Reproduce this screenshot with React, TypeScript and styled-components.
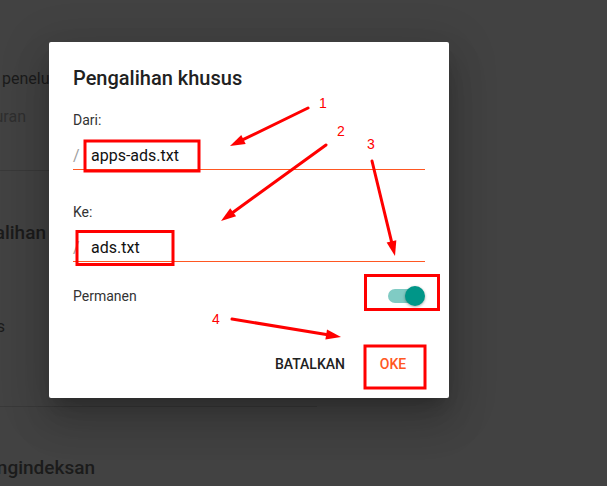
import React from 'react';
import styled, { createGlobalStyle } from 'styled-components';

const GlobalStyle = createGlobalStyle`
  html, body {
    margin: 0;
    padding: 0;
    background: #424242;
  }
  * {
    box-sizing: border-box;
  }
`;

const Page = styled.div`
  position: relative;
  width: 607px;
  height: 486px;
  overflow: hidden;
  background: #424242;
  font-family: Roboto, 'Liberation Sans', sans-serif;
`;

// the settings page that sits under the dark overlay
const BgColumn = styled.div`
  display: flex;
  flex-direction: column;
  padding-top: 67px;
  width: 317px;
`;

const BgLine = styled.div<{ $top: number; $end?: number; $faint?: boolean; $heading?: boolean }>`
  display: flex;
  justify-content: ${({ $end }) => ($end ? 'flex-end' : 'flex-start')};
  width: ${({ $end }) => ($end ? `${$end}px` : 'auto')};
  margin-top: ${({ $top }) => $top}px;
  padding-left: ${({ $end }) => ($end ? '0' : '2px')};
  white-space: nowrap;
  height: 24px;
  line-height: 24px;
  font-size: ${({ $heading }) => ($heading ? '19px' : '16px')};
  font-weight: ${({ $heading }) => ($heading ? 500 : 400)};
  color: ${({ $faint }) => ($faint ? '#2f2f2f' : '#1b1b1b')};
`;

const BgDivider = styled.div<{ $top: number }>`
  margin-top: ${({ $top }) => $top}px;
  height: 1px;
  width: 317px;
  background: #393939;
`;

const Dialog = styled.div`
  position: absolute;
  left: 49px;
  top: 42px;
  width: 400px;
  height: 356px;
  padding: 24px 24px 16px;
  background: #ffffff;
  border-radius: 2px;
  box-shadow: 0 11px 15px -7px rgba(0, 0, 0, 0.2), 0 24px 38px 3px rgba(0, 0, 0, 0.14),
    0 9px 46px 8px rgba(0, 0, 0, 0.12);
  display: flex;
  flex-direction: column;
`;

const Title = styled.h2`
  margin: 0;
  font-size: 20px;
  line-height: 24px;
  font-weight: 500;
  color: #212121;
`;

const Label = styled.div<{ $top: number }>`
  margin-top: ${({ $top }) => $top}px;
  font-size: 14px;
  line-height: 20px;
  color: #333333;
`;

const InputRow = styled.div`
  display: flex;
  align-items: center;
  margin-top: 14px;
  padding-bottom: 1px;
  border-bottom: 1px solid #ff5722;
  height: 26px;
  font-size: 16px;
  line-height: 24px;
`;

const Prefix = styled.span`
  width: 18px;
  color: #9e9e9e;
`;

const Value = styled.span`
  color: #111111;
`;

const ToggleRow = styled.div`
  display: flex;
  align-items: center;
  justify-content: space-between;
  margin-top: 24px;
  height: 20px;
  font-size: 14px;
  color: #333333;
`;

const Switch = styled.div`
  position: relative;
  width: 37px;
  height: 20px;
  display: flex;
  align-items: center;
`;

const Track = styled.div`
  width: 34px;
  height: 14px;
  border-radius: 7px;
  background: #80cbc4;
`;

const Thumb = styled.div`
  position: absolute;
  left: 17px;
  top: 0;
  width: 20px;
  height: 20px;
  border-radius: 50%;
  background: #009688;
  box-shadow: 0 1px 3px rgba(0, 0, 0, 0.35);
`;

const Actions = styled.div`
  display: flex;
  justify-content: flex-end;
  margin-top: 40px;
`;

const Action = styled.button<{ $primary?: boolean }>`
  height: 36px;
  min-width: 64px;
  padding: 0 16px;
  border: none;
  background: transparent;
  font-family: Roboto, 'Liberation Sans', sans-serif;
  font-size: 14px;
  font-weight: 500;
  text-transform: uppercase;
  color: ${({ $primary }) => ($primary ? '#ff5722' : '#212121')};
`;

const Marks = styled.svg`
  position: absolute;
  left: 0;
  top: 0;
  pointer-events: none;
`;

const MarkNumber = styled.text`
  font-family: 'Liberation Sans', sans-serif;
  font-size: 14px;
  fill: #ff0000;
`;

const RED = '#ff0000';

const Arrow = ({ x1, y1, x2, y2 }: { x1: number; y1: number; x2: number; y2: number }) => {
  const a = Math.atan2(y2 - y1, x2 - x1);
  const len = 15;
  const half = 5;
  const bx = x2 - len * Math.cos(a);
  const by = y2 - len * Math.sin(a);
  const px = -Math.sin(a) * half;
  const py = Math.cos(a) * half;
  return (
    <g>
      <line x1={x1} y1={y1} x2={bx} y2={by} stroke={RED} strokeWidth={3} strokeLinecap="round" />
      <polygon points={`${x2},${y2} ${bx + px},${by + py} ${bx - px},${by - py}`} fill={RED} />
    </g>
  );
};

const boxes = [
  { x: 85, y: 141, w: 114, h: 30 },
  { x: 77, y: 231.5, w: 96, h: 33 },
  { x: 365.5, y: 275.5, w: 73, h: 34 },
  { x: 365, y: 346, w: 60, h: 42 },
];

const arrows = [
  { x1: 308, y1: 108, x2: 230, y2: 146 },
  { x1: 326, y1: 145, x2: 221, y2: 221 },
  { x1: 372, y1: 161, x2: 395, y2: 256 },
  { x1: 232, y1: 319, x2: 341, y2: 337 },
];

const numbers = [
  { n: '1', x: 319, y: 108 },
  { n: '2', x: 337, y: 136 },
  { n: '3', x: 367, y: 149 },
  { n: '4', x: 212, y: 324 },
];

export default function App() {
  return (
    <Page>
      <GlobalStyle />
      <BgColumn>
        <BgLine $top={0}>penelusuran khusus</BgLine>
        <BgLine $top={14} $end={26} $faint>
          Pengukuran
        </BgLine>
        <BgDivider $top={41} />
        <BgLine $top={50} $end={46} $heading>
          Kesalahan dan pengalihan
        </BgLine>
        <BgLine $top={70} $end={5}>
          Pengalihan khusus
        </BgLine>
        <BgDivider $top={67} />
        <BgLine $top={49} $end={95} $heading>
          Perayap dan pengindeksan
        </BgLine>
      </BgColumn>

      <Dialog>
        <Title>Pengalihan khusus</Title>
        <Label $top={20}>Dari:</Label>
        <InputRow>
          <Prefix>/</Prefix>
          <Value>apps-ads.txt</Value>
        </InputRow>
        <Label $top={32}>Ke:</Label>
        <InputRow>
          <Prefix>/</Prefix>
          <Value>ads.txt</Value>
        </InputRow>
        <ToggleRow>
          <span>Permanen</span>
          <Switch>
            <Track />
            <Thumb />
          </Switch>
        </ToggleRow>
        <Actions>
          <Action>Batalkan</Action>
          <Action $primary>Oke</Action>
        </Actions>
      </Dialog>

      <Marks width={607} height={486} viewBox="0 0 607 486">
        {boxes.map((b, i) => (
          <rect key={i} x={b.x} y={b.y} width={b.w} height={b.h} fill="none" stroke={RED} strokeWidth={3} />
        ))}
        {arrows.map((a, i) => (
          <Arrow key={i} {...a} />
        ))}
        {numbers.map((t) => (
          <MarkNumber key={t.n} x={t.x} y={t.y}>
            {t.n}
          </MarkNumber>
        ))}
      </Marks>
    </Page>
  );
}
